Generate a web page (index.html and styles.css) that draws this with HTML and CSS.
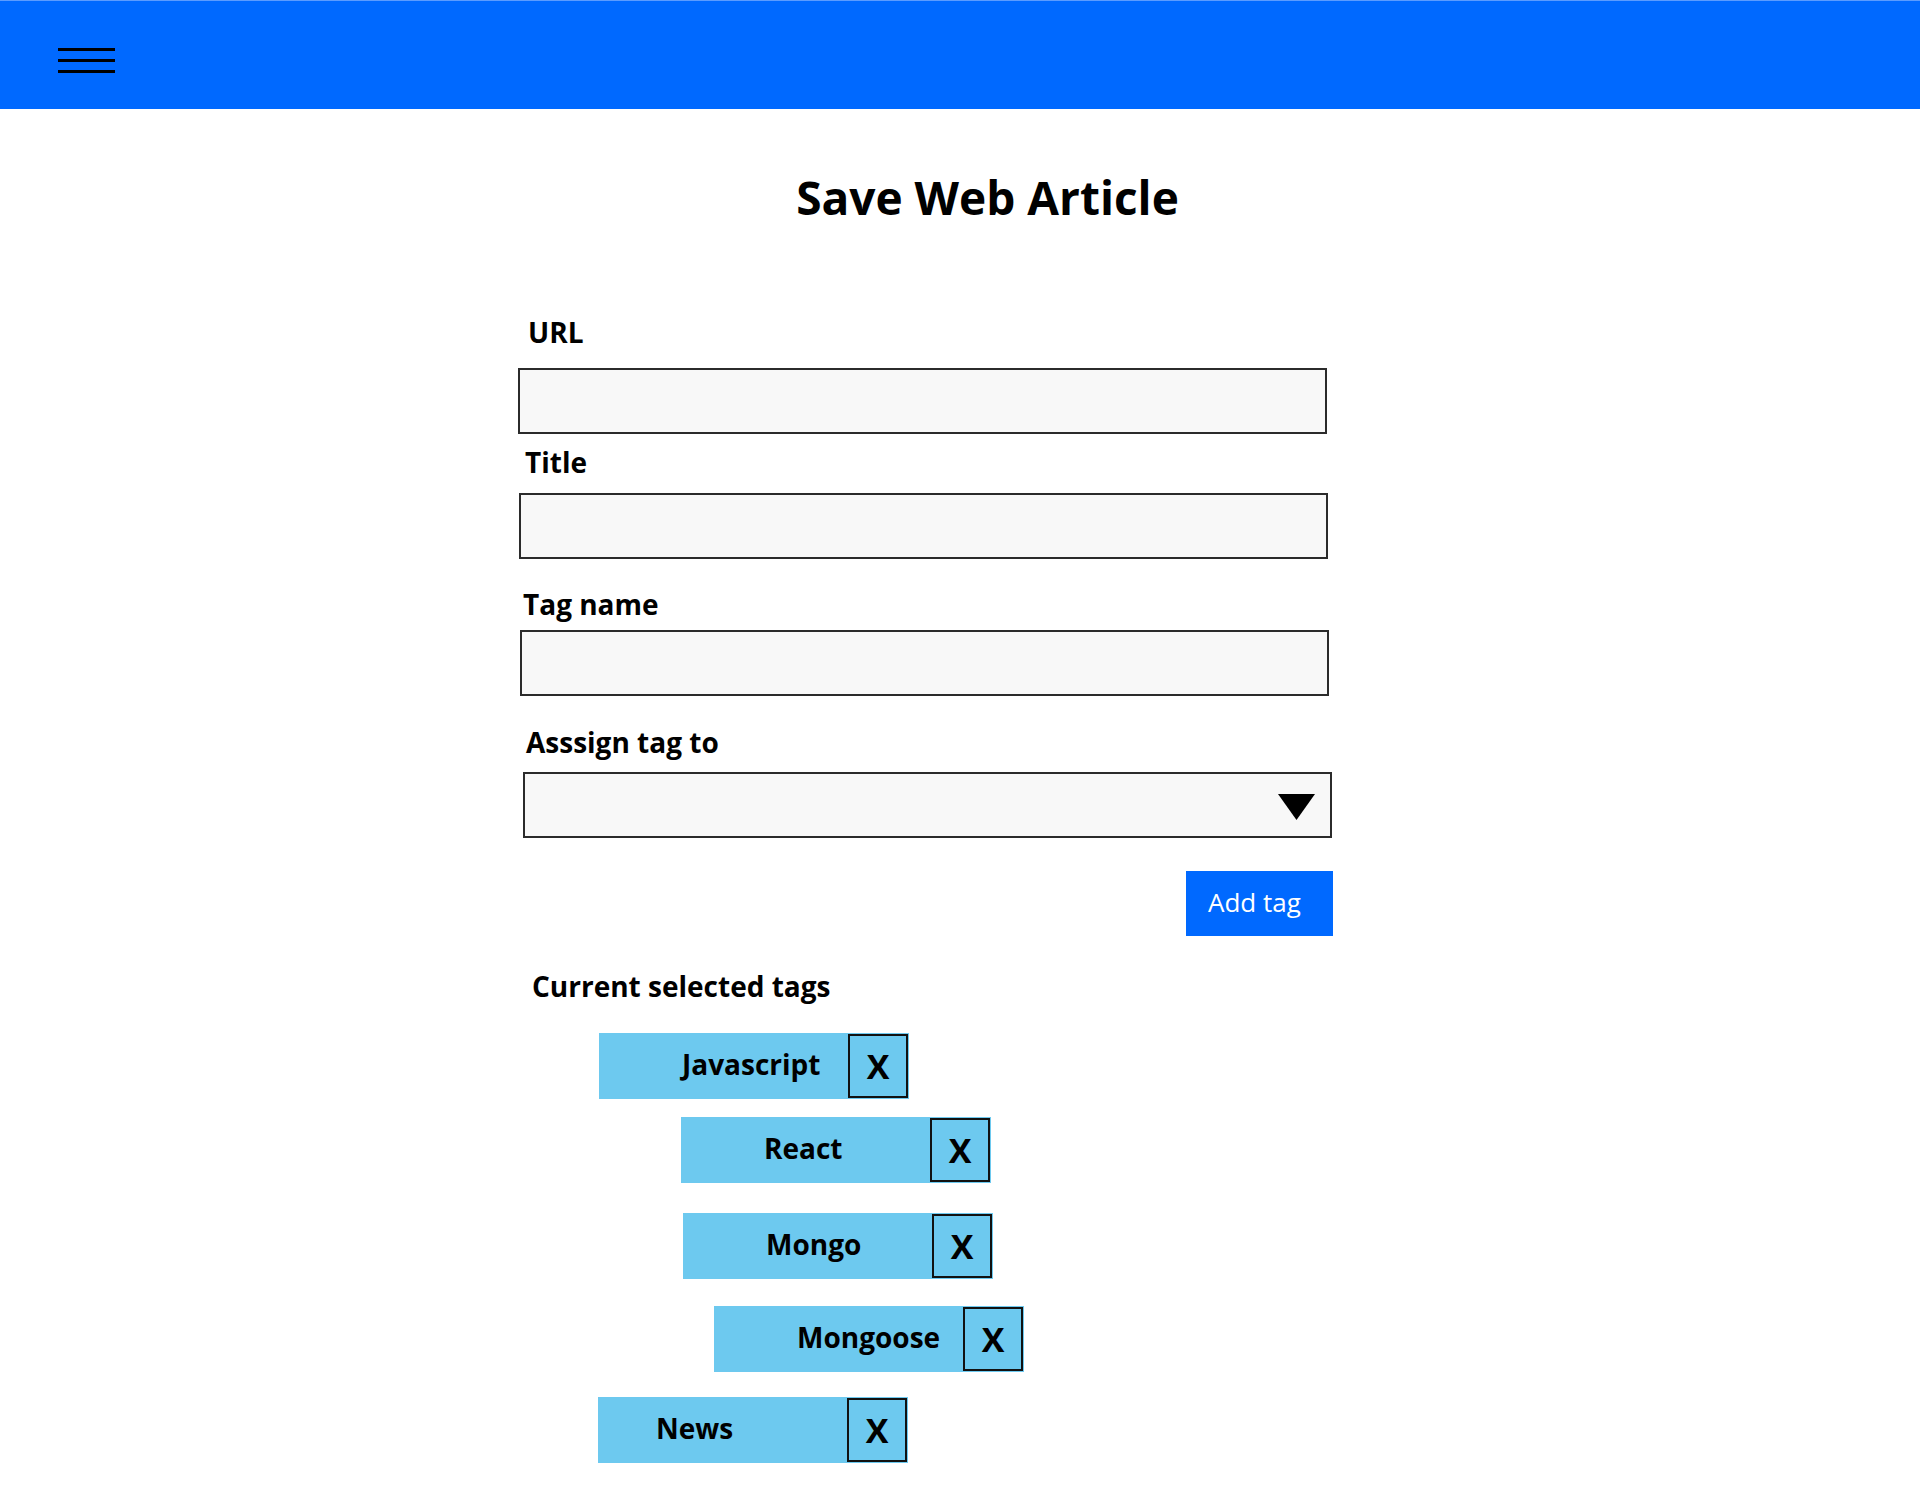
FILE: index.html
```html
<!DOCTYPE html>
<html lang="en">
<head>
<meta charset="utf-8">
<title>Save Web Article</title>
<link rel="stylesheet" href="styles.css">
</head>
<body>
<header class="topbar">
  <button class="menu-btn" type="button" aria-label="Menu">
    <span class="menu-line"></span>
    <span class="menu-line"></span>
    <span class="menu-line"></span>
  </button>
</header>
<main class="page">
  <h1 class="page-title">Save Web Article</h1>
  <form class="article-form">
    <label class="field-label label-url">URL</label>
    <div class="text-input input-url"></div>
    <label class="field-label label-title">Title</label>
    <div class="text-input input-title"></div>
    <label class="field-label label-tag">Tag name</label>
    <div class="text-input input-tag"></div>
    <label class="field-label label-assign">Asssign tag to</label>
    <div class="select-box">
      <svg class="select-arrow" width="37" height="26" viewBox="0 0 37 26"><polygon points="0,0 37,0 18.5,26" fill="#000"/></svg>
    </div>
    <div class="actions">
      <button class="add-btn" type="button">Add tag</button>
    </div>
    <h2 class="tags-heading">Current selected tags</h2>
    <ul class="tag-list">
      <li class="tag tag-js"><span class="tag-name">Javascript</span><span class="tag-remove">X</span></li>
      <li class="tag tag-react"><span class="tag-name">React</span><span class="tag-remove">X</span></li>
      <li class="tag tag-mongo"><span class="tag-name">Mongo</span><span class="tag-remove">X</span></li>
      <li class="tag tag-mongoose"><span class="tag-name">Mongoose</span><span class="tag-remove">X</span></li>
      <li class="tag tag-news"><span class="tag-name">News</span><span class="tag-remove">X</span></li>
    </ul>
  </form>
</main>
</body>
</html>
```

FILE: styles.css
```css
* { box-sizing: border-box; }

html, body {
  margin: 0;
  padding: 0;
  background: #ffffff;
  font-family: "Open Sans", "Noto Sans", sans-serif;
  color: #000;
}

.topbar {
  height: 109px;
  background: #0069ff;
  border-top: 1px solid #5c9cff;
  padding: 47px 0 0 58px;
}

.menu-btn {
  display: flex;
  flex-direction: column;
  gap: 8px;
  padding: 0;
  margin: 0;
  border: 0;
  background: transparent;
  width: 57px;
}

.menu-line {
  display: block;
  width: 57px;
  height: 3px;
  background: #000;
}

.page {
  display: flex;
  flex-direction: column;
}

.page-title {
  margin: 65px 0 0 55px;
  text-align: center;
  font-size: 46px;
  line-height: 46px;
  font-weight: 700;
}

.article-form {
  display: flex;
  flex-direction: column;
  align-items: flex-start;
  width: 815px;
  margin-left: 518px;
}

.field-label {
  display: block;
  font-size: 28px;
  line-height: 28px;
  font-weight: 700;
}

.label-url { margin: 98px 0 0 10px; }
.label-title { margin: 14px 0 0 7px; }
.label-tag { margin: 31px 0 0 5px; }
.label-assign { margin: 32px 0 0 8px; }

.text-input,
.select-box {
  width: 809px;
  height: 66px;
  background: #f8f8f8;
  border: 2px solid #2b2b2b;
}

.input-url { margin: 22px 0 0 0; }
.input-title { margin: 17px 0 0 1px; }
.input-tag { margin: 12px 0 0 2px; }

.select-box {
  margin: 16px 0 0 5px;
  display: flex;
  align-items: center;
  justify-content: flex-end;
  padding: 0 15px 0 0;
}

.select-arrow { display: block; margin-top: 3px; }

.actions {
  width: 100%;
  display: flex;
  justify-content: flex-end;
  margin-top: 33px;
}

.add-btn {
  width: 147px;
  height: 65px;
  background: #0069ff;
  color: #fff;
  border: 0;
  padding: 0 0 4px 22px;
  display: flex;
  align-items: center;
  font-family: "Open Sans", "Noto Sans", sans-serif;
  font-size: 26px;
  font-weight: 400;
}

.tags-heading {
  margin: 36px 0 0 14px;
  font-size: 28px;
  line-height: 28px;
  font-weight: 700;
}

.tag-list {
  list-style: none;
  margin: 0;
  padding: 0;
  display: flex;
  flex-direction: column;
}

.tag {
  width: 310px;
  height: 66px;
  background: #6dc9ef;
  display: flex;
  align-items: center;
  justify-content: space-between;
  padding: 0 1px 0 83px;
}

.tag-name {
  font-size: 28px;
  font-weight: 700;
  padding-bottom: 4px;
}

.tag-remove {
  width: 60px;
  height: 64px;
  border: 2px solid #111;
  display: flex;
  align-items: center;
  justify-content: center;
  font-size: 34px;
  font-weight: 700;
}

.tag-js { margin: 33px 0 0 81px; }
.tag-react { margin: 18px 0 0 163px; }
.tag-mongo { margin: 30px 0 0 165px; }
.tag-mongoose { margin: 27px 0 0 196px; }
.tag-news { margin: 25px 0 0 80px; padding-left: 58px; }
```
